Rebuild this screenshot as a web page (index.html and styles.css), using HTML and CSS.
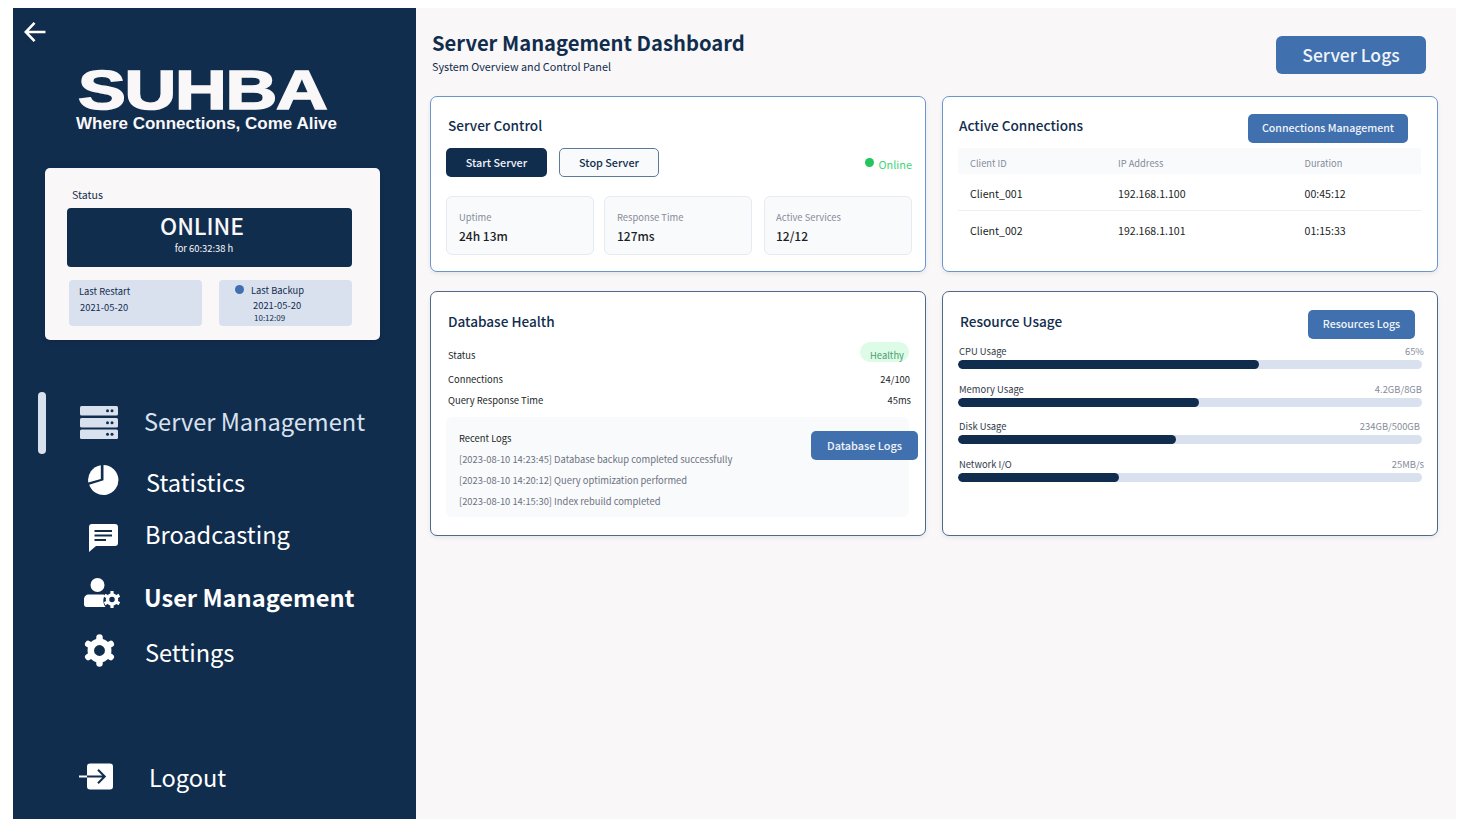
FILE: index.html
```html
<!DOCTYPE html>
<html lang="en">
<head>
<meta charset="utf-8">
<title>Server Management Dashboard</title>
<link rel="stylesheet" href="styles.css">
</head>
<body>
<div class="frame">
  <aside class="sidebar">
    <svg class="back" viewBox="0 0 24 22" width="22" height="20" aria-hidden="true"><path d="M23.500 11H2M11.500 1 1.800 11 11.500 21" fill="none" stroke="#fff" stroke-width="2.800"/></svg>
    <div class="logo">
      <div class="logo-word">SUHBA</div>
      <div class="logo-tag">Where Connections, Come Alive</div>
    </div>
    <section class="status-card">
      <div class="status-label">Status</div>
      <div class="status-box">
        <div class="status-big">ONLINE</div>
        <div class="status-small">for 60:32:38 h</div>
      </div>
      <div class="status-tiles">
        <div class="tile tile-restart">
          <div class="tile-title">Last Restart</div>
          <div class="tile-date">2021-05-20</div>
        </div>
        <div class="tile tile-backup">
          <div class="tile-title"><span class="tile-dot"></span>Last Backup</div>
          <div class="tile-date">2021-05-20</div>
          <div class="tile-time">10:12:09</div>
        </div>
      </div>
    </section>
    <nav class="nav">
      <span class="nav-marker"></span>
      <a class="nav-item nav-server">
        <svg class="nav-icon" viewBox="0 0 38 33" width="38" height="33" aria-hidden="true">
          <g fill="#d9e1ef"><rect y="0" width="38" height="9.500" rx="1.500"/><rect y="12" width="38" height="9.500" rx="1.500"/><rect y="23.500" width="38" height="9.500" rx="1.500"/></g>
          <g fill="#112d4e"><circle cx="27.500" cy="4.800" r="1.500"/><circle cx="32" cy="4.800" r="1.500"/><circle cx="27.500" cy="16.800" r="1.500"/><circle cx="32" cy="16.800" r="1.500"/><circle cx="27.500" cy="28.300" r="1.500"/><circle cx="32" cy="28.300" r="1.500"/></g>
        </svg>
        <span>Server Management</span>
      </a>
      <a class="nav-item nav-stats">
        <svg class="nav-icon" viewBox="0 0 32 32" width="32" height="32" aria-hidden="true"><g fill="#fff"><path d="M13.800 1.200A15 15 0 0 0 1.300 18.500L13.800 15Z"/><path d="M16.500 1V16.200L2.200 20.800A15 15 0 1 0 16.500 1Z"/></g></svg>
        <span>Statistics</span>
      </a>
      <a class="nav-item nav-broad">
        <svg class="nav-icon" viewBox="0 0 29 28" width="29" height="28" aria-hidden="true"><path fill="#fff" fill-rule="evenodd" d="M3 0H26A3 3 0 0 1 29 3V19A3 3 0 0 1 26 22H7L0 28V3A3 3 0 0 1 3 0ZM5.500 6V8H23V6ZM5.500 10.500V12.500H23V10.500ZM5.500 15V17H17V15Z"/></svg>
        <span>Broadcasting</span>
      </a>
      <a class="nav-item nav-user">
        <svg class="nav-icon" viewBox="0 0 37 30" width="37" height="30" aria-hidden="true">
          <circle cx="13.500" cy="7" r="7" fill="#fff"/>
          <path fill="#fff" d="M5 16.500H19C20 16.500 20.500 16.700 21 17 19 20 18.500 25 21.500 29H2.500C1 29 0 28 0 26.500V21.500C0 18.500 2 16.500 5 16.500Z"/>
          <circle cx="28" cy="21.500" r="4.500" fill="none" stroke="#fff" stroke-width="3.500"/>
          <path d="M28 13V16M28 27V30M35.360 17.250 32.760 18.750M35.360 25.750 32.760 24.250M20.640 17.250 23.240 18.750M20.640 25.750 23.240 24.250" stroke="#fff" stroke-width="3.200"/>
        </svg>
        <span>User Management</span>
      </a>
      <a class="nav-item nav-settings">
        <svg class="nav-icon" viewBox="0 0 33 33" width="33" height="33" aria-hidden="true">
          <circle cx="16.500" cy="16.500" r="8.700" fill="none" stroke="#fff" stroke-width="6.500"/>
          <path d="M16.500 3.500V6M16.500 27V29.500M5.200 10 7.300 11.200M25.700 21.800 27.800 23M5.200 23 7.300 21.800M25.700 11.200 27.800 10" stroke="#fff" stroke-width="6.500" stroke-linecap="round"/>
        </svg>
        <span>Settings</span>
      </a>
      <a class="nav-item nav-logout">
        <svg class="nav-icon" viewBox="0 0 34 27" width="34" height="27" aria-hidden="true">
          <rect x="8" y="0.500" width="26" height="26" rx="3" fill="#fff"/>
          <path d="M0 13.500H25.500" fill="none" stroke="#fff" stroke-width="2"/>
          <path d="M8 13.500H25.500M19 6.800 25.700 13.500 19 20.200" fill="none" stroke="#112d4e" stroke-width="2"/>
        </svg>
        <span>Logout</span>
      </a>
    </nav>
  </aside>
  <main class="main">
    <header class="topbar">
      <div>
        <h1 class="page-title">Server Management Dashboard</h1>
        <p class="page-sub">System Overview and Control Panel</p>
      </div>
      <button class="btn-blue btn-logs">Server Logs</button>
    </header>
    <div class="cards">
      <section class="card card-light">
        <h2 class="card-title title-control">Server Control</h2>
        <div class="control-row">
          <button class="btn-start">Start Server</button>
          <button class="btn-stop">Stop Server</button>
          <div class="online"><span class="online-dot"></span><span class="online-text">Online</span></div>
        </div>
        <div class="stats">
          <div class="stat"><div class="stat-label">Uptime</div><div class="stat-value">24h 13m</div></div>
          <div class="stat"><div class="stat-label">Response Time</div><div class="stat-value">127ms</div></div>
          <div class="stat"><div class="stat-label">Active Services</div><div class="stat-value">12/12</div></div>
        </div>
      </section>
      <section class="card card-light">
        <div class="card-head head-conn">
          <h2 class="card-title">Active Connections</h2>
          <button class="btn-blue btn-conn">Connections Management</button>
        </div>
        <div class="table">
          <div class="t-row t-head"><span>Client ID</span><span>IP Address</span><span>Duration</span></div>
          <div class="t-row t-first"><span>Client_001</span><span>192.168.1.100</span><span>00:45:12</span></div>
          <div class="t-row t-second"><span>Client_002</span><span>192.168.1.101</span><span>01:15:33</span></div>
        </div>
      </section>
      <section class="card card-dark card-db">
        <h2 class="card-title title-db">Database Health</h2>
        <div class="db-row db-status"><span class="db-status-label">Status</span><span class="pill">Healthy</span></div>
        <div class="db-row db-conn"><span>Connections</span><span>24/100</span></div>
        <div class="db-row db-query"><span>Query Response Time</span><span class="db-q-val">45ms</span></div>
        <div class="logs">
          <div class="logs-title">Recent Logs</div>
          <div class="log">[2023-08-10 14:23:45] Database backup completed successfully</div>
          <div class="log">[2023-08-10 14:20:12] Query optimization performed</div>
          <div class="log">[2023-08-10 14:15:30] Index rebuild completed</div>
        </div>
        <button class="btn-blue btn-db">Database Logs</button>
      </section>
      <section class="card card-dark">
        <div class="card-head head-res">
          <h2 class="card-title">Resource Usage</h2>
          <button class="btn-blue btn-res">Resources Logs</button>
        </div>
        <div class="meters">
          <div class="meter"><div class="meter-top"><span>CPU Usage</span><span class="meter-val meter-cpu">65%</span></div><div class="bar"><div class="fill" style="width:64.800%"></div></div></div>
          <div class="meter"><div class="meter-top"><span>Memory Usage</span><span class="meter-val">4.2GB/8GB</span></div><div class="bar"><div class="fill" style="width:51.900%"></div></div></div>
          <div class="meter"><div class="meter-top"><span>Disk Usage</span><span class="meter-val meter-disk">234GB/500GB</span></div><div class="bar"><div class="fill" style="width:47%"></div></div></div>
          <div class="meter"><div class="meter-top"><span>Network I/O</span><span class="meter-val meter-cpu">25MB/s</span></div><div class="bar"><div class="fill" style="width:34.800%"></div></div></div>
        </div>
      </section>
    </div>
  </main>
</div>
</body>
</html>
```
FILE: styles.css
```css
* { box-sizing: border-box; }
html, body { height: 100%; }
body {
  margin: 0;
  padding: 8px 19px 18px 13px;
  background: #fff;
  font-family: "Noto Sans CJK JP", "Noto Sans", sans-serif;
  color: #1b1f27;
  overflow: hidden;
}
h1, h2, p { margin: 0; }
button { font-family: inherit; cursor: pointer; white-space: nowrap; padding: 0 0 2px; }
.frame { display: flex; height: 811px; width: 1443px; }

/* sidebar */
.sidebar { width: 403px; flex: none; background: #112d4e; padding: 14px 0 0; display: flex; flex-direction: column; color: #fff; }
.sidebar > * { flex: none; }
.back { display: block; margin-left: 11px; }
.logo { margin: 28px 0 0 63px; height: 77px; }
.logo-word {
  font-family: "Liberation Sans", sans-serif;
  font-weight: 700;
  font-size: 56px;
  line-height: 40px;
  letter-spacing: -1px;
  color: #f9f7f8;
  -webkit-text-stroke: 1.6px #f9f7f8;
  transform: scaleX(1.28);
  transform-origin: left center;
  margin-left: 2px;
}
.logo-tag { font-family: "Liberation Sans", sans-serif; font-weight: 700; font-size: 17px; line-height: 20px; color: #f9f7f8; white-space: nowrap; margin-top: 4px; }

.status-card { margin: 21px 0 0 32px; width: 335px; height: 172px; border-radius: 5px; background: #f9f7f8; padding: 19px 28px 0 22px; color: #112d4e; box-shadow: 0 2px 4px rgba(0,0,0,.15); }
.status-label { font-size: 10.600px; line-height: 16px; margin-left: 5px; }
.status-box { height: 59px; margin-top: 5px; background: #112d4e; border-radius: 4px; color: #f9f7f8; text-align: center; padding: 4px 15px 0 0; }
.status-big { font-size: 22.800px; line-height: 28px; font-weight: 500; }
.status-small { font-size: 9.400px; line-height: 14px; margin-top: 1px; padding-left: 4px; }
.status-tiles { display: flex; gap: 17px; margin: 13px 0 0 2px; }
.tile { width: 133px; height: 46px; background: #d9e1ef; border-radius: 4px; font-size: 9.400px; }
.tile-restart { padding: 3px 0 0 10px; }
.tile-backup { padding: 2px 0 0 16px; text-align: left; }
.tile-title { line-height: 16px; }
.tile-restart .tile-date { margin: 0 0 0 1px; line-height: 16px; }
.tile-dot { display: inline-block; width: 9px; height: 9px; border-radius: 50%; background: #4070ad; margin-right: 7px; }
.tile-backup .tile-date { line-height: 14px; margin-left: 18px; }
.tile-time { font-size: 8px; line-height: 12px; margin-left: 19px; }

.nav { position: relative; flex: 1; }
.nav-marker { position: absolute; left: 25px; top: 52px; width: 8px; height: 62px; border-radius: 4px; background: #d9e1ef; }
.nav-item { display: flex; align-items: center; color: #fff; font-size: 23.600px; line-height: 40px; height: 40px; }
.nav-server { margin: 61px 0 0 67px; color: #d9e1ef; gap: 26px; }
.nav-server .nav-icon { margin-top: 2px; }
.nav-stats { margin: 21px 0 0 74px; gap: 27px; }
.nav-stats .nav-icon { margin-top: -4px; }
.nav-broad { margin: 12px 0 0 76px; gap: 27px; }
.nav-broad .nav-icon { margin-top: 8px; }
.nav-user { margin: 23px 0 0 71px; gap: 23px; font-weight: 700; }
.nav-user .nav-icon { margin-top: -8px; }
.nav-settings { margin: 15px 0 0 70px; gap: 29px; }
.nav-settings .nav-icon { margin-top: -4px; }
.nav-logout { margin: 85px 0 0 66px; gap: 36px; }
.nav-logout .nav-icon { margin-top: -2px; }

/* main */
.main { flex: 1; background: #f9f7f8; padding: 0 18px 0 14px; min-width: 0; }
.topbar { display: flex; justify-content: space-between; height: 88px; padding: 21px 12px 0 2px; align-items: flex-start; }
.page-title { font-size: 20.200px; line-height: 28px; font-weight: 700; color: #112d4e; }
.page-sub { font-size: 10.800px; line-height: 18px; color: #112d4e; margin-top: 0; }
.btn-blue { background: #4070ad; color: #f0f4fa; border: 0; border-radius: 5px; font-weight: 500; }
.btn-logs { width: 150px; height: 38px; font-size: 17.500px; margin: 7px 0 0; border-radius: 6px; }

.cards { display: grid; grid-template-columns: 496px 496px; grid-template-rows: 176px 245px; column-gap: 16px; row-gap: 19px; }
.card { background: #fff; border-radius: 7px; border: 1px solid #6a96cb; box-shadow: 0 2px 4px rgba(17,45,78,.08); padding: 0 15px; position: relative; }
.card-dark { border-color: #4d6a8d; }
.card-title { font-size: 13.600px; line-height: 22px; font-weight: 500; color: #112d4e; }
.title-control { margin: 17px 0 0 2px; }
.control-row { display: flex; margin-top: 12px; height: 29px; }
.btn-start { width: 101px; height: 29px; background: #112d4e; color: #f0f4fa; border: 0; border-radius: 5px; font-size: 10.800px; font-weight: 500; }
.btn-stop { width: 100px; height: 29px; margin-left: 12px; background: #f9fafc; color: #112d4e; border: 1px solid #5c7a9e; border-radius: 5px; font-size: 10.800px; font-weight: 500; }
.online { margin: 0 -2px 0 auto; display: flex; height: 29px; align-items: flex-start; }
.online-dot { width: 9px; height: 9px; margin-top: 10px; border-radius: 50%; background: #22c55e; }
.online-text { font-size: 10.900px; line-height: 18px; color: #3fd676; margin: 7px 0 0 5px; }
.stats { display: flex; gap: 11px; margin-top: 19px; width: 466px; }
.stat { width: 148px; flex: none; height: 59px; border: 1px solid #e5eaf3; border-radius: 6px; background: #f9fafc; padding: 13px 12px 0; }
.stat:nth-child(2) { margin-left: -1px; margin-right: 1px; }
.stat:nth-child(3) { padding-left: 11px; }
.stat-label { font-size: 9.400px; line-height: 15px; color: #858c99; }
.stat-value { font-size: 12px; line-height: 20px; font-weight: 500; color: #1b1f27; margin-top: 1px; }

.card-head { display: flex; justify-content: space-between; }
.head-conn { padding: 17px 14px 0 1px; height: 51px; }
.btn-conn { width: 160px; height: 29px; font-size: 10.600px; }
.table { margin-right: 1px; }
.t-row { display: grid; grid-template-columns: 148px 186.500px 1fr; padding-left: 12px; font-size: 10.600px; }
.t-head { height: 26px; background: #f9fafc; color: #858c99; font-size: 9.300px; line-height: 30px; }
.t-first { height: 37px; line-height: 40px; border-bottom: 1px solid #edeff3; }
.t-second { height: 37px; line-height: 40px; }

.title-db { margin: 18px 0 0 2px; }
.db-row { display: flex; justify-content: space-between; font-size: 9.400px; line-height: 16px; margin: 0 0 0 2px; color: #1b1f27; }
.db-status { margin-top: 10px; height: 20px; align-items: flex-start; }
.db-status-label { line-height: 26px; }
.pill { width: 49px; height: 20px; margin-right: 1px; padding-left: 5px; border-radius: 10px; background: #dcfce7; color: #4f9b72; text-align: center; line-height: 26px; }
.db-conn { margin-top: 9px; }
.db-query { margin-top: 5px; }
.db-q-val { margin-right: -1px; }
.logs { height: 100px; width: 463px; margin-top: 9px; background: #f9fafc; border-radius: 6px; padding: 13px 13px 0; }
.logs-title { font-size: 9.400px; line-height: 16px; }
.log { font-size: 9.400px; line-height: 16px; color: #6b7280; margin-top: 5px; white-space: nowrap; }
.btn-db { position: absolute; left: 380px; top: 139px; width: 107px; height: 29px; font-size: 10.900px; }

.head-res { padding: 18px 7px 0 2px; height: 51px; }
.btn-res { width: 107px; height: 29px; font-size: 10.600px; }
.meters { margin-top: 1px; }
.meter { height: 37.500px; }
.meter-top { display: flex; justify-content: space-between; font-size: 9.400px; line-height: 14px; height: 16px; padding-left: 1px; color: #333a46; }
.meter-val { color: #858c99; }
.meter-cpu { margin-right: -2px; }
.meter-disk { margin-right: 2px; }
.bar { height: 9px; border-radius: 5px; background: #d9e1ef; overflow: hidden; }
.fill { height: 100%; border-radius: 5px; background: #112d4e; }
```
